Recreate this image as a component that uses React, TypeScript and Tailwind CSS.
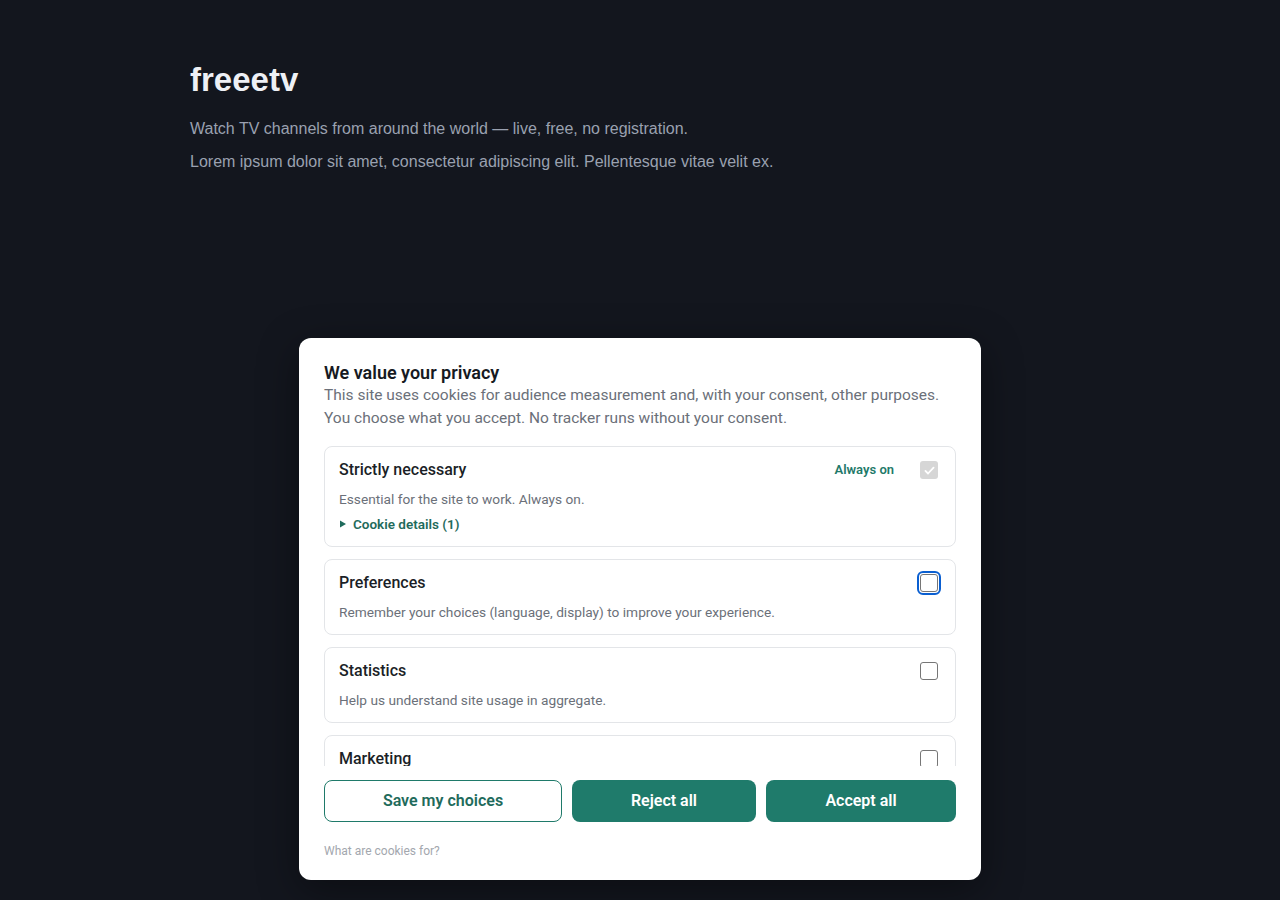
import React from 'react';

type Purpose = {
  id: string;
  title: string;
  description: string;
  locked?: boolean;
  focused?: boolean;
  details?: number;
};

const purposes: Purpose[] = [
  {
    id: 'necessary',
    title: 'Strictly necessary',
    description: 'Essential for the site to work. Always on.',
    locked: true,
    details: 1,
  },
  {
    id: 'preferences',
    title: 'Preferences',
    description: 'Remember your choices (language, display) to improve your experience.',
    focused: true,
  },
  {
    id: 'statistics',
    title: 'Statistics',
    description: 'Help us understand site usage in aggregate.',
  },
  {
    id: 'marketing',
    title: 'Marketing',
    description: 'Show you relevant ads on other sites and measure their effect.',
  },
];

const Checkbox = ({ locked, focused }: { locked?: boolean; focused?: boolean }) => {
  if (locked) {
    return (
      <span className="flex h-[18px] w-[18px] items-center justify-center rounded-[3px] bg-[#d6d6d6]">
        <svg viewBox="0 0 16 16" className="h-[13px] w-[13px]" fill="none" stroke="#ffffff" strokeWidth="2.2" strokeLinecap="round" strokeLinejoin="round">
          <path d="M3 8.5l3.2 3.2L13 4.5" />
        </svg>
      </span>
    );
  }
  return (
    <span
      className={`flex h-[18px] w-[18px] items-center justify-center rounded-[3px] ${
        focused ? 'outline-2 outline-[#0a5fd1] outline-offset-1' : ''
      }`}
    >
      <span className="h-[18px] w-[18px] rounded-[3px] border border-[#767676] bg-white" />
    </span>
  );
};

const PurposeCard = ({ purpose }: { purpose: Purpose }) => (
  <div
    className={`shrink-0 rounded-lg border border-[#e3e5e8] bg-white pl-[14px] pr-[17px] pt-[13px] ${
      purpose.details !== undefined ? 'pb-[14px]' : 'pb-[13px]'
    }`}
  >
    <div className="flex h-5 items-center justify-between">
      <span className="text-[16px] font-medium text-[#1b1f27]">{purpose.title}</span>
      <div className="flex items-center">
        {purpose.locked && (
          <span className="mr-[26px] text-[13px] font-semibold text-[#1f7a6a]">Always on</span>
        )}
        <Checkbox locked={purpose.locked} focused={purpose.focused} />
      </div>
    </div>
    <p className="mt-[10px] text-[13.7px] leading-[18px] text-[#6b7079]">{purpose.description}</p>
    {purpose.details !== undefined && (
      <div className="mt-[8px] flex items-center gap-[6px] text-[13.5px] font-semibold leading-4 text-[#1f6b5c]">
        <svg viewBox="0 0 8 8" className="h-[8px] w-[8px]" fill="currentColor">
          <path d="M1 0.5L7 4L1 7.5Z" />
        </svg>
        <span>Cookie details ({purpose.details})</span>
      </div>
    )}
  </div>
);

export default function App() {
  return (
    <div className="relative min-h-[900px] w-full bg-[#13161e]">
      {/* Page */}
      <div className="px-[190px] pt-[60px]" style={{ fontFamily: '"Liberation Sans", Arial, sans-serif' }}>
        <h1 className="text-[33px] font-bold leading-[40px] text-[#eef0f5]">freeetv</h1>
        <p className="mt-[19px] text-[16px] leading-[20px] text-[#9aa1b0]">
          Watch TV channels from around the world — live, free, no registration.
        </p>
        <p className="mt-[13px] text-[16px] leading-[20px] text-[#9aa1b0]">
          Lorem ipsum dolor sit amet, consectetur adipiscing elit. Pellentesque vitae velit ex.
        </p>
      </div>

      {/* Consent dialog */}
      <div
        className="absolute left-[299px] top-[338px] w-[682px] rounded-xl bg-white px-[25px] pt-[23px] pb-[21px] shadow-[0_10px_40px_rgba(0,0,0,0.4)]"
        style={{ fontFamily: 'Roboto, "Noto Sans", sans-serif' }}
      >
        <h2 className="text-[18px] font-semibold leading-[23px] text-[#161a22]">We value your privacy</h2>
        <p className="whitespace-nowrap text-[15.5px] leading-[23px] text-[#6b7079]">
          This site uses cookies for audience measurement and, with your consent, other purposes.
          <br />
          You choose what you accept. No tracker runs without your consent.
        </p>

        <div className="mt-[16px] flex h-[320px] flex-col gap-3 overflow-hidden">
          {purposes.map((p) => (
            <PurposeCard key={p.id} purpose={p} />
          ))}
        </div>

        <div className="mt-[14px] flex gap-[10px]">
          <button className="h-[42px] w-[238px] rounded-lg border border-[#1f7a6a] bg-white text-[16px] font-semibold text-[#1f6b5c]">
            Save my choices
          </button>
          <button className="h-[42px] w-[184px] rounded-lg bg-[#1f7b6b] text-[16px] font-semibold text-white">
            Reject all
          </button>
          <button className="h-[42px] flex-1 rounded-lg bg-[#1f7b6b] text-[16px] font-semibold text-white">
            Accept all
          </button>
        </div>

        <p className="mt-[22px] text-[12px] leading-[15px] text-[#a3a7ae]">What are cookies for?</p>
      </div>
    </div>
  );
}
